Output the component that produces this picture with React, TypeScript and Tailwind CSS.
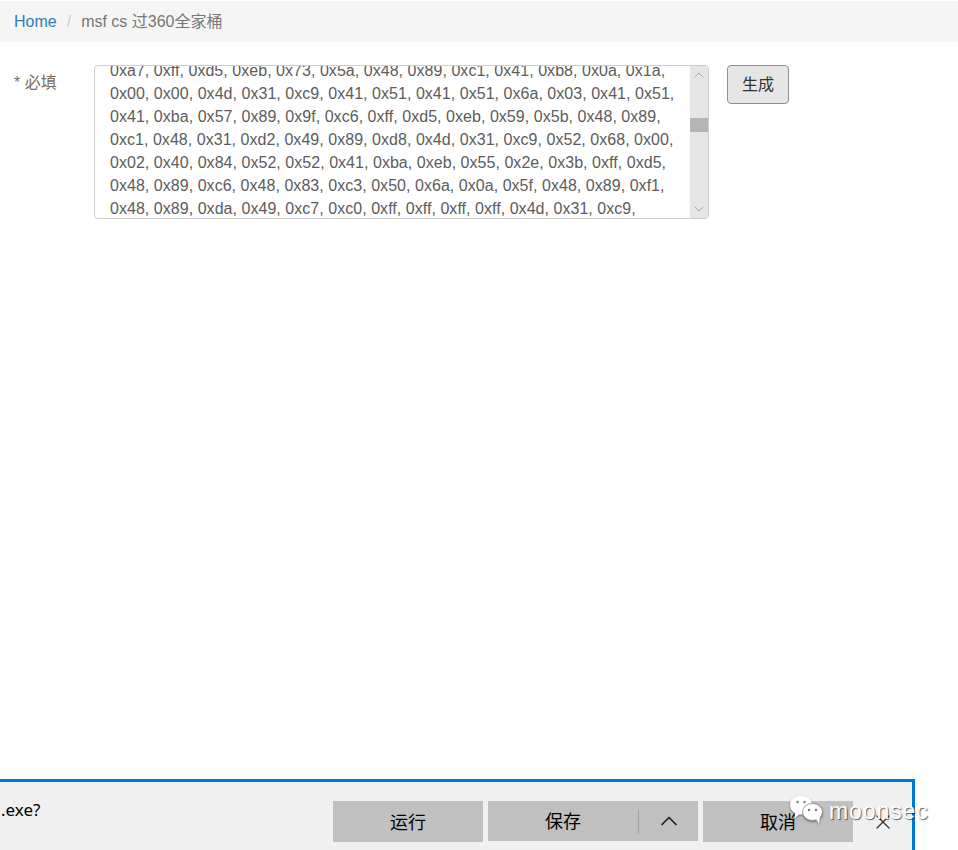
import { ChevronDown, ChevronUp, X } from "lucide-react";

const lines = [
  "0xa7, 0xff, 0xd5, 0xeb, 0x73, 0x5a, 0x48, 0x89, 0xc1, 0x41, 0xb8, 0x0a, 0x1a,",
  "0x00, 0x00, 0x4d, 0x31, 0xc9, 0x41, 0x51, 0x41, 0x51, 0x6a, 0x03, 0x41, 0x51,",
  "0x41, 0xba, 0x57, 0x89, 0x9f, 0xc6, 0xff, 0xd5, 0xeb, 0x59, 0x5b, 0x48, 0x89,",
  "0xc1, 0x48, 0x31, 0xd2, 0x49, 0x89, 0xd8, 0x4d, 0x31, 0xc9, 0x52, 0x68, 0x00,",
  "0x02, 0x40, 0x84, 0x52, 0x52, 0x41, 0xba, 0xeb, 0x55, 0x2e, 0x3b, 0xff, 0xd5,",
  "0x48, 0x89, 0xc6, 0x48, 0x83, 0xc3, 0x50, 0x6a, 0x0a, 0x5f, 0x48, 0x89, 0xf1,",
  "0x48, 0x89, 0xda, 0x49, 0xc7, 0xc0, 0xff, 0xff, 0xff, 0xff, 0x4d, 0x31, 0xc9,",
];

function WechatIcon() {
  return (
    <svg width="36" height="30" viewBox="0 0 36 30" className="drop-shadow-[0_1px_1px_rgba(0,0,0,0.45)]">
      <ellipse cx="12" cy="10" rx="11" ry="9.5" fill="#fff" />
      <path d="M6 17 L6 23 L12 18 Z" fill="#fff" />
      <circle cx="8.5" cy="7" r="1.2" fill="#777" />
      <circle cx="15.5" cy="7" r="1.2" fill="#777" />
      <ellipse cx="23.5" cy="17" rx="10" ry="8.5" fill="#fff" stroke="#888" strokeWidth="0.8" />
      <path d="M27 24 L30 29 L31 22 Z" fill="#fff" />
      <circle cx="20" cy="15" r="1.2" fill="#777" />
      <circle cx="27" cy="15" r="1.2" fill="#777" />
    </svg>
  );
}

export default function App() {
  return (
    <div className="relative flex h-[850px] flex-col overflow-hidden bg-white pt-px font-['Liberation_Sans','Noto_Sans_CJK_SC',sans-serif] text-base text-[#555]">
      <div className="flex h-[41px] items-center bg-[#f5f5f5] pl-[14px]">
        <span className="text-[#337ab7]">Home</span>
        <span className="mx-[10px] text-[#ccc]">/</span>
        <span className="text-[#777]">msf cs 过360全家桶</span>
      </div>

      <div className="flex items-start pt-[23px]">
        <div className="w-[94px] pl-[14px] pt-[6px] leading-[23px] text-[#7d6e5f]">* 必填</div>
        <div className="flex h-[154px] w-[615px] overflow-hidden rounded border border-[#ccc]">
          <div className="flex-1 overflow-hidden pl-[15px] text-[#5c5c5c]">
            <div className="-mt-[7px] leading-[23px] tracking-[0.04px] whitespace-nowrap">
              {lines.map((line) => (
                <div key={line}>{line}</div>
              ))}
            </div>
          </div>
          <div className="flex w-[18px] flex-col items-center bg-[#e6e6e6] text-[#8a8a8a]">
            <ChevronUp size={16} strokeWidth={1} className="mt-px" />
            <div className="mt-[35px] h-[14px] w-full bg-[#b5b5b5]" />
            <ChevronDown size={16} strokeWidth={1} className="mt-auto mb-px" />
          </div>
        </div>
        <button className="ml-[18px] h-[39px] w-[62px] rounded border border-[#8f8f8f] bg-[#e6e6e6] text-[#333]">
          生成
        </button>
      </div>

      <div className="mt-auto flex h-[71px] w-[915px] items-start border-t-[3px] border-r-[3px] border-[#0078d7] bg-[#f0f0f0] text-black">
        <div className="w-[333px] pt-[16px] pl-px font-['Noto_Sans','Noto_Sans_CJK_SC',sans-serif] text-[17px] leading-[24px]">.exe?</div>
        <div className="flex gap-[5px] pt-[19px] text-lg">
          <div className="flex h-[41px] w-[150px] items-center justify-center bg-[#c0c0c0] pt-[2px]">运行</div>
          <div className="flex h-[40px] w-[210px] items-center bg-[#c0c0c0]">
            <div className="flex h-[25px] w-[151px] items-center justify-center border-r border-[#a0a0a0] pt-[2px]">保存</div>
            <div className="flex flex-1 justify-center">
              <ChevronUp size={28} strokeWidth={1.5} className="text-[#222]" />
            </div>
          </div>
          <div className="flex h-[41px] w-[150px] items-center justify-center bg-[#c0c0c0] pt-[2px]">取消</div>
        </div>
        <div className="flex flex-1 justify-center pt-[28px]">
          <X size={24} strokeWidth={1.25} className="text-[#333]" />
        </div>
      </div>

      <div className="absolute top-[795px] left-[789px] flex items-center gap-[4px]">
        <WechatIcon />
        <span className="pt-[2px] text-[23px] leading-none tracking-[0.9px] text-white font-['Liberation_Sans',sans-serif] [text-shadow:1px_1px_1px_rgba(0,0,0,0.6)]">moonsec</span>
      </div>
    </div>
  );
}
